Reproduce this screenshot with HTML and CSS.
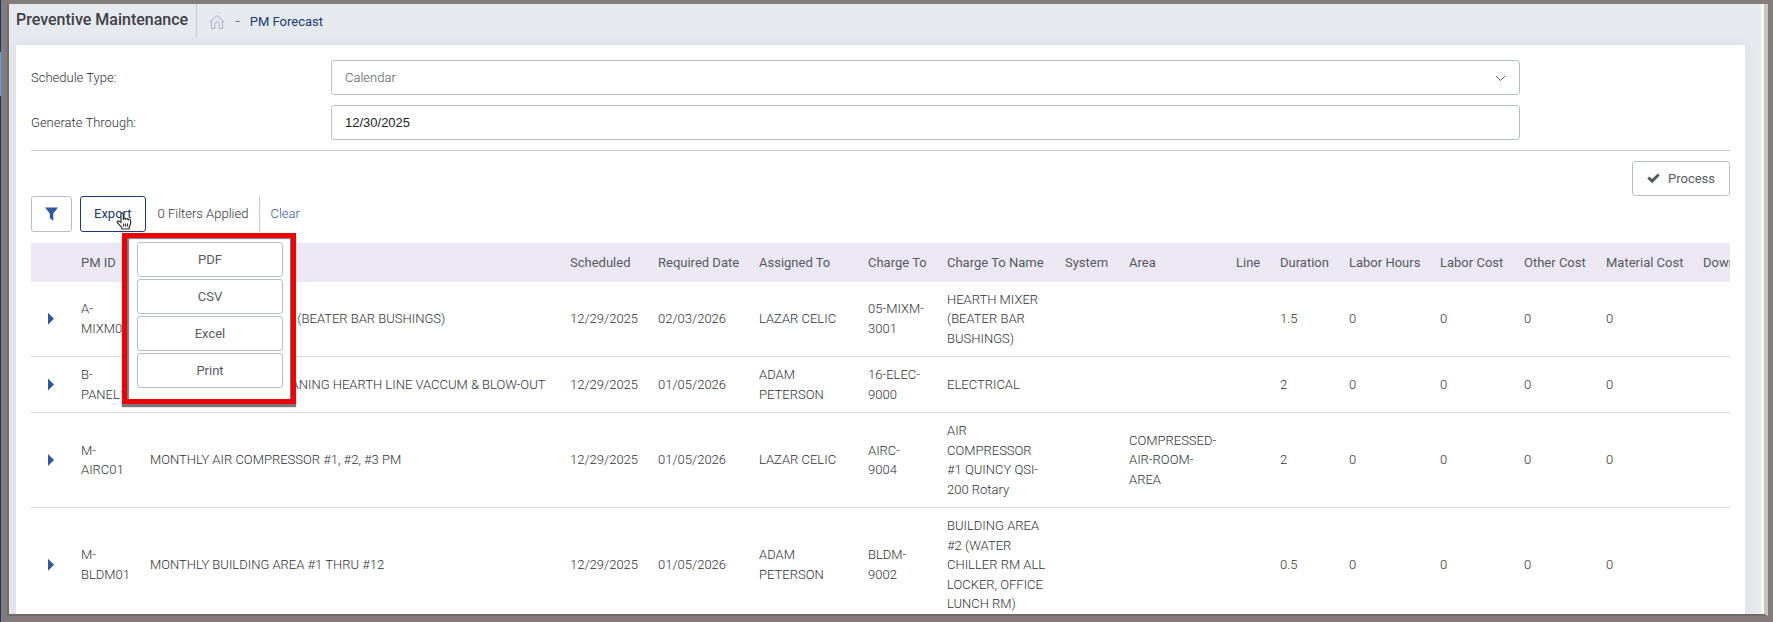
FILE: index.html
```html
<!DOCTYPE html>
<html lang="en">
<head>
    <meta charset="UTF-8">
    <meta name="viewport" content="width=device-width, initial-scale=1.0">
    <title>PM Forecast</title>
    <link rel="stylesheet" href="styles.css">
</head>
<body>
    <div class="side-strip"><div class="side-active"></div></div>
    <div class="frame">
        <main class="page">
            <header class="subheader">
                <h1 class="title">Preventive Maintenance</h1>
                <nav class="breadcrumb">
                    <a href="#" class="home" aria-label="Home">
                        <svg width="16" height="16" viewBox="0 0 16 16" fill="none" stroke="#aab2c2" stroke-linejoin="round" stroke-linecap="round">
                            <path d="M1 8 8 1.500l7 6.500M2.500 7v7.500h3.300V10a2.200 2.200 0 0 1 4.400 0v4.500h3.300V7"/>
                        </svg>
                    </a>
                    <span class="dash">-</span>
                    <a href="#" class="crumb">PM Forecast</a>
                </nav>
            </header>

            <section class="panel">
                <form class="form">
                    <label for="scheduleType">Schedule Type:</label>
                    <div class="select-wrap">
                        <select id="scheduleType" class="control">
                            <option>Calendar</option>
                        </select>
                        <svg class="chevron" width="11" height="7" viewBox="0 0 11 7" fill="none" stroke="#575962"><path d="M1 1l4.500 4.500L10 1"/></svg>
                    </div>
                    <label for="generateThrough">Generate Through:</label>
                    <input id="generateThrough" class="control date" type="text" value="12/30/2025">
                </form>

                <div class="actions">
                    <button class="button process">
                        <svg width="13" height="11" viewBox="0 0 13 11" fill="#575962"><path d="M0.300 5.600 2.400 3.500l2.700 2.600L10.700 0.500l2 2.100L5.200 10.200z"/></svg>
                        Process
                    </button>
                </div>

                <div class="toolbar">
                    <button class="button filter" aria-label="Filter">
                        <svg width="13" height="14" viewBox="0 0 13 14" fill="#30599c"><path d="M0 0.500h13L8.300 6.500v7.200L4.800 11.300V6.500z"/></svg>
                    </button>
                    <div class="export">
                        <button class="button export-button">Export</button>
                        <svg class="pointer" width="16" height="18" viewBox="0 0 16 18" fill="#fff" stroke="#333" stroke-width="1.200" stroke-linejoin="round">
                            <path d="M5 10.500V2.300a1.200 1.200 0 0 1 2.400 0V7.500a1.200 1.200 0 0 1 2.400 0a1.200 1.200 0 0 1 2.400.5a1.200 1.200 0 0 1 2.400.8v3.200l-1.400 3.200V17H5.800v-1.600L1.200 10.500a1.200 1.200 0 0 1 2-1.200z"/>
                            <path d="M7.500 11.500v3M9.500 11.500v3M11.500 11.500v3"/>
                        </svg>
                        <div class="menu">
                            <button class="button">PDF</button>
                            <button class="button">CSV</button>
                            <button class="button">Excel</button>
                            <button class="button">Print</button>
                        </div>
                    </div>
                    <span class="applied">0 Filters Applied</span>
                    <a href="#" class="clear">Clear</a>
                </div>

                <div class="table-wrap">
                    <table class="grid">
                        <colgroup>
                            <col class="w-toggle"><col class="w-id"><col><col class="w-scheduled"><col class="w-required">
                            <col class="w-assigned"><col class="w-charge"><col class="w-name"><col class="w-system"><col class="w-area">
                            <col class="w-line"><col class="w-duration"><col class="w-hours"><col class="w-labor"><col class="w-other">
                            <col class="w-material"><col class="w-down">
                        </colgroup>
                        <thead>
                            <tr>
                                <th></th>
                                <th>PM ID</th>
                                <th></th>
                                <th>Scheduled</th>
                                <th>Required Date</th>
                                <th>Assigned To</th>
                                <th>Charge To</th>
                                <th>Charge To Name</th>
                                <th>System</th>
                                <th>Area</th>
                                <th>Line</th>
                                <th>Duration</th>
                                <th>Labor Hours</th>
                                <th>Labor Cost</th>
                                <th>Other Cost</th>
                                <th>Material Cost</th>
                                <th>Downtime</th>
                            </tr>
                        </thead>
                        <tbody>
                            <tr>
                                <td><button class="toggle" aria-label="Expand"></button></td>
                                <td>A-MIXM01</td>
                                <td>ANNUAL HEARTH MIXER (BEATER BAR BUSHINGS)</td>
                                <td>12/29/2025</td>
                                <td>02/03/2026</td>
                                <td>LAZAR CELIC</td>
                                <td>05-MIXM-3001</td>
                                <td>HEARTH MIXER (BEATER BAR BUSHINGS)</td>
                                <td></td>
                                <td></td>
                                <td></td>
                                <td>1.5</td>
                                <td>0</td>
                                <td>0</td>
                                <td>0</td>
                                <td>0</td>
                                <td></td>
                            </tr>
                            <tr>
                                <td><button class="toggle" aria-label="Expand"></button></td>
                                <td>B-PANEL1</td>
                                <td>BI-ANNUAL PANELS CLEANING HEARTH LINE VACCUM &amp; BLOW-OUT</td>
                                <td>12/29/2025</td>
                                <td>01/05/2026</td>
                                <td>ADAM PETERSON</td>
                                <td>16-ELEC-9000</td>
                                <td>ELECTRICAL</td>
                                <td></td>
                                <td></td>
                                <td></td>
                                <td>2</td>
                                <td>0</td>
                                <td>0</td>
                                <td>0</td>
                                <td>0</td>
                                <td></td>
                            </tr>
                            <tr>
                                <td><button class="toggle" aria-label="Expand"></button></td>
                                <td>M-AIRC01</td>
                                <td>MONTHLY AIR COMPRESSOR #1, #2, #3 PM</td>
                                <td>12/29/2025</td>
                                <td>01/05/2026</td>
                                <td>LAZAR CELIC</td>
                                <td>AIRC-9004</td>
                                <td>AIR COMPRESSOR #1 QUINCY QSI-200 Rotary</td>
                                <td></td>
                                <td>COMPRESSED-AIR-ROOM-AREA</td>
                                <td></td>
                                <td>2</td>
                                <td>0</td>
                                <td>0</td>
                                <td>0</td>
                                <td>0</td>
                                <td></td>
                            </tr>
                            <tr>
                                <td><button class="toggle" aria-label="Expand"></button></td>
                                <td>M-BLDM01</td>
                                <td>MONTHLY BUILDING AREA #1 THRU #12</td>
                                <td>12/29/2025</td>
                                <td>01/05/2026</td>
                                <td>ADAM PETERSON</td>
                                <td>BLDM-9002</td>
                                <td>BUILDING AREA #2 (WATER CHILLER RM ALL LOCKER, OFFICE LUNCH RM)</td>
                                <td></td>
                                <td></td>
                                <td></td>
                                <td>0.5</td>
                                <td>0</td>
                                <td>0</td>
                                <td>0</td>
                                <td>0</td>
                                <td></td>
                            </tr>
                        </tbody>
                    </table>
                </div>
            </section>
        </main>
    </div>
</body>
</html>
```

FILE: styles.css
```css
* {
    box-sizing: border-box;
}
body {
    margin: 0;
    height: 100vh;
    display: flex;
    overflow: hidden;
    background: #847c7c;
    font-family: Roboto, "Liberation Sans", sans-serif;
    font-size: 13px;
    font-weight: 300;
    line-height: 1.5;
    color: #2e2f36;
}
a {
    text-decoration: none;
}

/* sliver of the side menu and the window frame */
.side-strip {
    width: 1px;
    padding-top: 52px;
    background: #1f3a73;
}
.side-active {
    height: 44px;
    background: #4aa3ff;
}
.frame {
    flex: 1;
    min-width: 0;
    display: flex;
    border: solid #847c7c;
    border-width: 4px 5px 6px 6px;
}
.page {
    flex: 1;
    min-width: 0;
    display: flex;
    flex-direction: column;
    overflow: hidden;
    padding: 0 19px 0 7px;
    background: #e6e9ed;
    border: solid #6d6b6b;
    border-width: 0 4px 2px 2px;
    border-right-color: #c5c5c3;
    box-shadow: inset -3px 0 #fafafa;
}

.subheader {
    flex: none;
    display: flex;
    align-items: flex-start;
    height: 41px;
}
.title {
    margin: 0;
    padding: 4px 8px 5px 0;
    border-right: 1px solid #c6c8cc;
    font-size: 16px;
    font-weight: 500;
    color: #3f4047;
}
.breadcrumb {
    display: flex;
    align-items: center;
    padding: 6px 0 0 12px;
}
.home {
    display: flex;
}
.dash {
    margin: 0 10px;
    font-size: 16px;
    color: #575962;
}
.crumb {
    font-weight: 400;
    color: #1b3a73;
}

.panel {
    flex: 1;
    padding: 15px;
    background: #fff;
    box-shadow: 0 0 13px rgba(82, 63, 105, 0.08);
}
.form {
    display: grid;
    grid-template-columns: 300px 70%;
    align-items: center;
    row-gap: 10px;
    padding-bottom: 10px;
    border-bottom: 1px solid #c8c9cc;
}
.select-wrap {
    position: relative;
}
.control {
    display: block;
    width: 100%;
    height: 35px;
    padding: 0 13px;
    appearance: none;
    border: 1px solid #b8bfc4;
    border-radius: 3px;
    background: #fff;
    font: inherit;
    color: #575962;
}
.date {
    font-family: "Liberation Sans", Arial, sans-serif;
    font-weight: 400;
    color: #222;
}
.chevron {
    position: absolute;
    right: 14px;
    top: 15px;
}

.button {
    height: 35px;
    padding: 0 14px;
    border: 1px solid #b8bfc4;
    border-radius: 3px;
    background: #fff;
    font: inherit;
    font-weight: 400;
    color: #575962;
    cursor: pointer;
}
.actions {
    display: flex;
    justify-content: flex-end;
    padding-top: 10px;
}
.process {
    display: flex;
    align-items: center;
    gap: 8px;
}
.toolbar {
    display: flex;
    align-items: center;
    padding-bottom: 11px;
}
.filter {
    display: flex;
    align-items: center;
    height: 36px;
    padding: 0 13px;
    margin-right: 8px;
}
.export {
    position: relative;
}
.export-button {
    display: block;
    height: 36px;
    padding: 0 13px;
    border-color: #1b3a73;
    color: #1b3a73;
}
.pointer {
    position: absolute;
    left: 36px;
    top: 16px;
}
.menu {
    position: absolute;
    z-index: 1;
    left: 42px;
    top: 37px;
    display: flex;
    flex-direction: column;
    gap: 2px;
    width: 174px;
    padding: 4px 8px 11px 10px;
    border: 5px solid #ea0606;
    background: #fff;
    box-shadow: 0 3px 1px #7d7676, inset 2px 1px 1px #7d7676, inset -1px 0 #7d7676;
}
.applied {
    padding: 8px 11px 8px 12px;
    border-right: 1px solid #c6c8cc;
}
.clear {
    padding-left: 10px;
    color: #30599c;
}

.table-wrap {
    overflow: hidden;
}
.grid {
    width: calc(100% + 50px);
    table-layout: fixed;
    border-collapse: collapse;
}
.grid th {
    padding: 10px 0 9px 10px;
    background: #ebe8f3;
    font-weight: 400;
    text-align: left;
    white-space: nowrap;
    color: #575962;
}
.grid td {
    padding: 8px 9px 8px 10px;
    border-bottom: 1px solid #d9dadc;
}
.grid td:first-child {
    padding: 0 0 0 17px;
}
.toggle {
    display: block;
    width: 6px;
    height: 12px;
    padding: 0;
    border: 0;
    background: #30599c;
    clip-path: polygon(0 0, 100% 50%, 0 100%);
}
.w-toggle { width: 40px; }
.w-id { width: 69px; }
.w-scheduled { width: 88px; }
.w-required { width: 101px; }
.w-assigned { width: 109px; }
.w-charge { width: 79px; }
.w-name { width: 118px; }
.w-system { width: 64px; }
.w-area { width: 107px; }
.w-line { width: 44px; }
.w-duration { width: 69px; }
.w-hours { width: 91px; }
.w-labor { width: 84px; }
.w-other { width: 82px; }
.w-material { width: 97px; }
.w-down { width: 87px; }
```
